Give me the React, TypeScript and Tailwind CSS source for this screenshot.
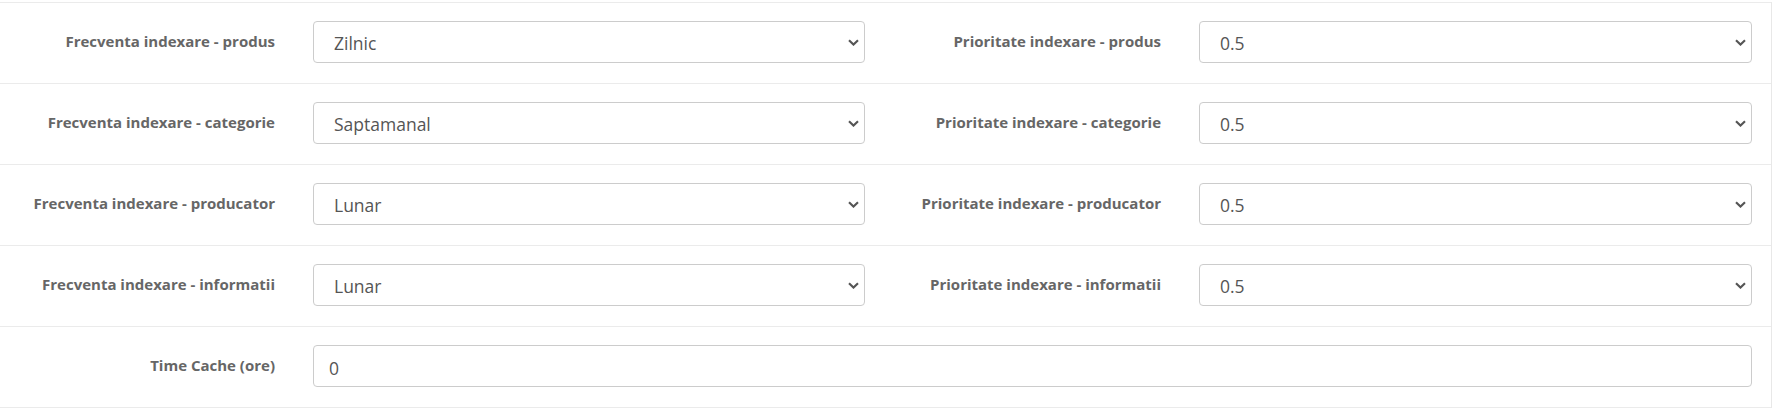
const rows = [
  { left: "Frecventa indexare - produs", leftVal: "Zilnic", right: "Prioritate indexare - produs", rightVal: "0.5" },
  { left: "Frecventa indexare - categorie", leftVal: "Saptamanal", right: "Prioritate indexare - categorie", rightVal: "0.5" },
  { left: "Frecventa indexare - producator", leftVal: "Lunar", right: "Prioritate indexare - producator", rightVal: "0.5" },
  { left: "Frecventa indexare - informatii", leftVal: "Lunar", right: "Prioritate indexare - informatii", rightVal: "0.5" },
];

const freqOptions = ["Intotdeauna", "Orar", "Zilnic", "Saptamanal", "Lunar", "Anual", "Niciodata"];
const prioOptions = ["0.1", "0.2", "0.3", "0.4", "0.5", "0.6", "0.7", "0.8", "0.9", "1.0"];

const Label: React.FC<{ text: string }> = ({ text }) => (
  <label className="flex items-center justify-end text-right text-[15px] font-bold text-[#666] leading-[20px] pb-[3px]">
    {text}
  </label>
);

const Select: React.FC<{ value: string; options: string[] }> = ({ value, options }) => (
  <div className="relative h-[42px]">
    <select
      defaultValue={value}
      className="appearance-none w-full h-full bg-white border border-[#ccc] rounded-[4px] pl-[20px] pr-8 pt-[3px] text-[17.5px] text-[#555] outline-none"
    >
      {options.map((o) => (
        <option key={o}>{o}</option>
      ))}
    </select>
    <svg
      className="absolute right-[6px] top-[18px] pointer-events-none"
      width="11"
      height="7"
      viewBox="0 0 11 7"
      fill="none"
    >
      <path d="M1 1.2 L5.5 5.6 L10 1.2" stroke="#555" strokeWidth="2.1" />
    </svg>
  </div>
);

const App: React.FC = () => {
  return (
    <div className="w-full h-[408px] bg-white pt-[2px]" style={{ fontFamily: '"Open Sans", sans-serif' }}>
      <div className="w-[1772px] border-r border-[#e8e8e8]">
        {rows.map((r) => (
          <div
            key={r.left}
            className="grid grid-cols-[275px_552px_258px_553px] gap-x-[38px] pr-[19px] pt-[18px] pb-[20px] border-t border-[#ebebeb]"
          >
            <Label text={r.left} />
            <Select value={r.leftVal} options={freqOptions} />
            <Label text={r.right} />
            <Select value={r.rightVal} options={prioOptions} />
          </div>
        ))}
        <div className="grid grid-cols-[275px_552px_258px_553px] gap-x-[38px] pr-[19px] pt-[18px] pb-[20px] border-t border-b border-[#ebebeb]">
          <Label text="Time Cache (ore)" />
          <div className="col-span-3 h-[42px]">
            <input
              type="text"
              defaultValue="0"
              className="w-full h-full border border-[#ccc] rounded-[4px] pl-[15px] pt-[3px] text-[17.5px] text-[#555] outline-none"
            />
          </div>
        </div>
      </div>
    </div>
  );
};

export default App;
